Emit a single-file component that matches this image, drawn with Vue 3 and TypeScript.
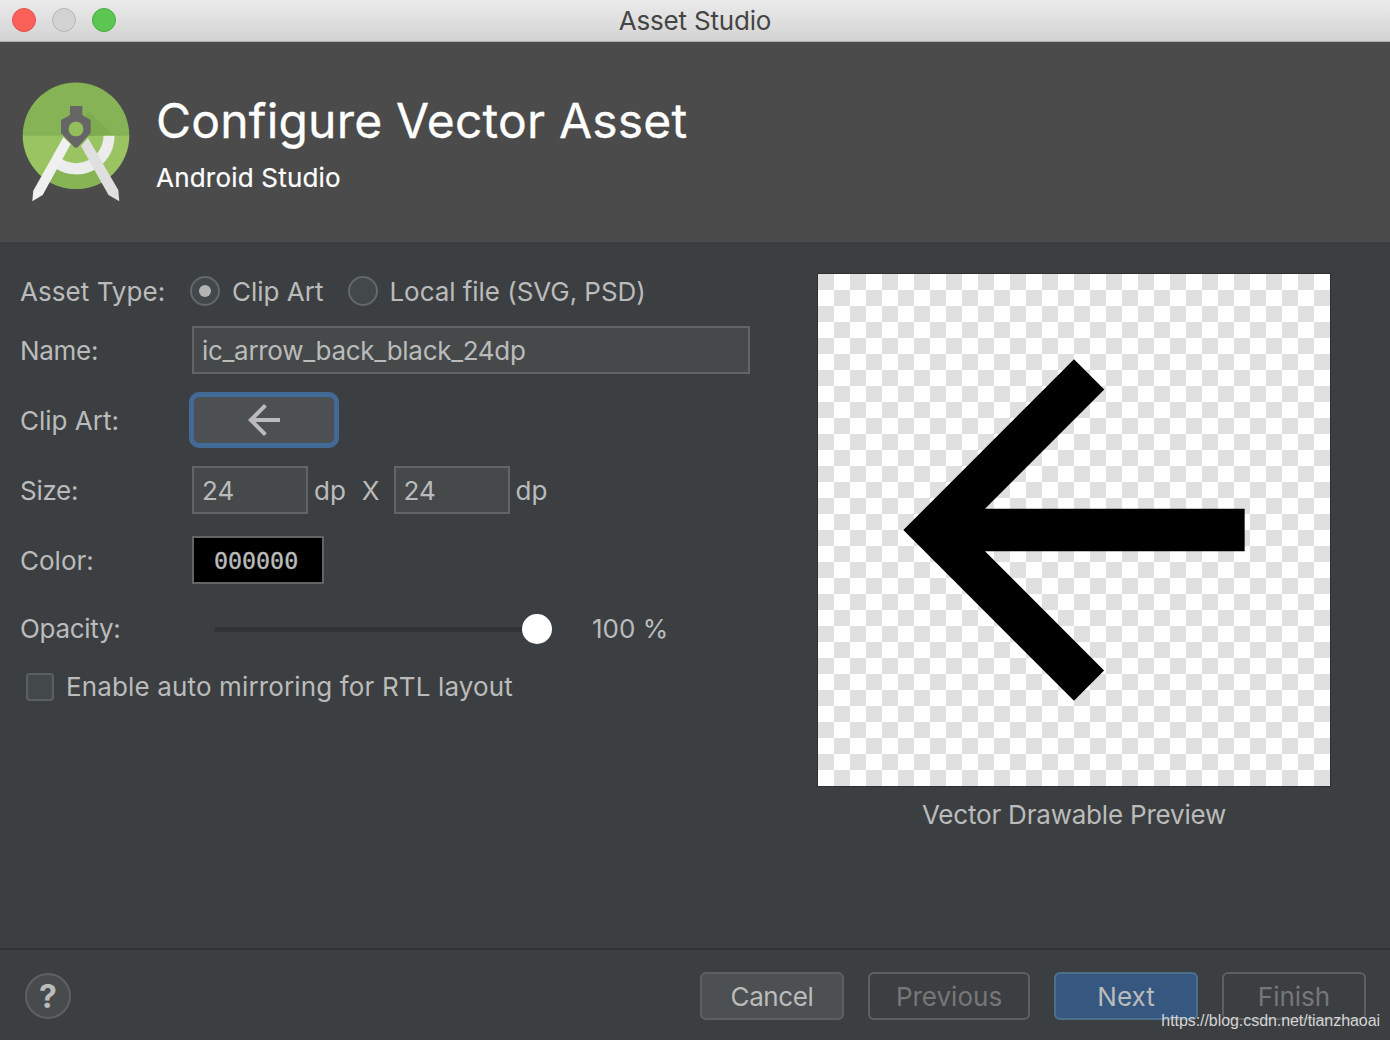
<script setup lang="ts">
const arrow = 'M20 11H7.83l5.59-5.59L12 4l-8 8 8 8 1.41-1.41L7.83 13H20v-2z'
</script>

<template>
  <div class="win">
    <div class="titlebar">
      <div class="lights">
        <span class="light red"></span>
        <span class="light gray"></span>
        <span class="light green"></span>
      </div>
      <div class="wintitle">Asset Studio</div>
    </div>

    <header class="head">
      <svg class="logo" viewBox="20 80 112 125" width="112" height="125">
        <defs>
          <clipPath id="disc"><circle cx="76" cy="135.7" r="53.3" /></clipPath>
        </defs>
        <g clip-path="url(#disc)">
          <rect x="20" y="80" width="112" height="56" fill="#87b357" />
          <rect x="20" y="135.7" width="112" height="56" fill="#9ac462" />
          <path d="M88 110 L114 135.7 H80 Z" fill="#7fac4e" />
          <path d="M51 165 A38.3 38.3 0 0 0 101 165 L118 195 H36 Z" fill="#86b454" />
        </g>
        <path d="M114.5 135.7 H103.5 A27.5 27.5 0 0 1 76 163.2 A27.5 27.5 0 0 1 57 155 L51 165 A38.3 38.3 0 0 0 114.5 135.7 Z" fill="#ececec" />
        <path d="M63.3 137.3 L70.7 144 L42.7 195 L32.3 201.3 L33.3 190.7 Z" fill="#f0f0f0" />
        <path d="M88 138 L81 146 L108.5 195 L119.3 201.3 L118.3 190 Z" fill="#dfdfdf" />
        <path fill-rule="evenodd" d="M70 106 H82.3 V115 L90.7 120 V133 L78 147 Q76 148.5 74 147 L61 133 V120 L70 115 Z M76 121.7 A7.3 7.3 0 1 0 76 136.3 A7.3 7.3 0 1 0 76 121.7 Z" fill="#666666" />
        <circle cx="76" cy="129" r="7.3" fill="#93be5a" />
      </svg>
      <div class="headtext">
        <div class="h1">Configure Vector Asset</div>
        <div class="h2">Android Studio</div>
      </div>
    </header>

    <main class="body">
      <section class="form">
        <div class="row r-type">
          <label class="lab">Asset Type:</label>
          <span class="radio on"><i></i></span>
          <span class="opt">Clip Art</span>
          <span class="radio second"></span>
          <span class="opt local">Local file (SVG, PSD)</span>
        </div>
        <div class="row r-name">
          <label class="lab">Name:</label>
          <div class="input name">ic_arrow_back_black_24dp</div>
        </div>
        <div class="row r-clip">
          <label class="lab">Clip Art:</label>
          <button class="clip" type="button">
            <svg viewBox="0 0 24 24" width="48" height="48"><path :d="arrow" fill="#bbbbbb" /></svg>
          </button>
        </div>
        <div class="row r-size">
          <label class="lab">Size:</label>
          <div class="input num">24</div>
          <span class="unit">dp</span>
          <span class="x">X</span>
          <div class="input num">24</div>
          <span class="unit">dp</span>
        </div>
        <div class="row r-color">
          <label class="lab">Color:</label>
          <div class="swatch">000000</div>
        </div>
        <div class="row r-op">
          <label class="lab">Opacity:</label>
          <div class="slider"><span class="thumb"></span></div>
          <span class="pct">100 %</span>
        </div>
        <div class="row r-check">
          <span class="check"></span>
          <span class="opt enable">Enable auto mirroring for RTL layout</span>
        </div>
      </section>

      <section class="preview">
        <div class="canvas">
          <svg viewBox="0 0 24 24" width="512" height="512"><path :d="arrow" fill="#000000" /></svg>
        </div>
        <div class="cap">Vector Drawable Preview</div>
      </section>
    </main>

    <footer class="foot">
      <span class="help">?</span>
      <div class="btns">
        <button class="btn cancel" type="button">Cancel</button>
        <button class="btn off prev" type="button">Previous</button>
        <button class="btn next" type="button">Next</button>
        <button class="btn off finish" type="button">Finish</button>
      </div>
      <span class="mark">https://blog.csdn.net/tianzhaoai</span>
    </footer>
  </div>
</template>

<style>
html, body { margin: 0; background: #3c3f41; }
</style>

<style scoped>
.win {
  position: relative;
  width: 1390px;
  height: 1040px;
  display: flex;
  flex-direction: column;
  overflow: hidden;
  background: #3c3f41;
  color: #bbbbbb;
  font-family: Inter, "Noto Sans", sans-serif;
  font-size: 26px;
}
.titlebar {
  position: relative;
  height: 41px;
  flex: none;
  display: flex;
  align-items: center;
  justify-content: center;
  background: linear-gradient(#ebebeb, #d3d3d3);
  border-bottom: 1px solid #b0b0b0;
}
.lights {
  position: absolute;
  left: 12px;
  top: 8px;
  display: flex;
  gap: 16px;
}
.light {
  width: 24px;
  height: 24px;
  border-radius: 50%;
  box-sizing: border-box;
}
.red { background: #fb6158; border: 1px solid #e2504a; }
.gray { background: #d2d2d2; border: 1px solid #b6b6b6; }
.green { background: #5bc652; border: 1px solid #48ab40; }
.wintitle { font-size: 26px; color: #454545; letter-spacing: -0.2px; }

.head {
  height: 200px;
  flex: none;
  box-sizing: border-box;
  background: #4b4b4b;
  display: flex;
  padding: 38px 0 0 20px;
}
.logo { flex: none; display: block; }
.headtext { margin-left: 24px; }
.h1 {
  font-size: 48px;
  line-height: 58px;
  margin-top: 12px;
  color: #ffffff;
  letter-spacing: 0.18px;
  -webkit-text-stroke: 0.3px #ffffff;
}
.h2 {
  font-size: 26px;
  line-height: 32px;
  margin-top: 12px;
  color: #ffffff;
  letter-spacing: 0.2px;
  -webkit-text-stroke: 0.2px #ffffff;
}

.body {
  flex: 1;
  display: flex;
  padding: 32px 60px 0 20px;
  justify-content: space-between;
}
.form { display: flex; flex-direction: column; margin-top: 2px; }
.row { display: flex; align-items: center; }
.lab { width: 172px; flex: none; }
.r-type { height: 30px; }
.r-type .lab { width: 170px; letter-spacing: 0.05px; }
.r-name { height: 48px; margin-top: 20px; }
.r-name .lab, .r-size .lab, .r-op .lab { letter-spacing: -0.3px; }
.r-clip { height: 56px; margin-top: 18px; }
.r-clip .lab { width: 169px; }
.r-size { height: 48px; margin-top: 18px; }
.r-color { height: 48px; margin-top: 22px; }
.r-op { height: 30px; margin-top: 30px; }
.r-op .lab, .r-op .pct { padding-bottom: 2px; }
.r-check { height: 30px; margin-top: 28px; }

.radio {
  width: 30px;
  height: 30px;
  box-sizing: border-box;
  flex: none;
  border-radius: 50%;
  border: 2px solid #646869;
  background: #43494a;
  display: flex;
  align-items: center;
  justify-content: center;
}
.radio i {
  width: 12px;
  height: 12px;
  border-radius: 50%;
  background: #b4b4b4;
}
.opt { margin-left: 12px; white-space: nowrap; }
.local { letter-spacing: -0.05px; margin-left: 11px; }
.enable { letter-spacing: 0.14px; padding-bottom: 2px; }
.radio.second { margin-left: 25px; }

.input {
  box-sizing: border-box;
  height: 48px;
  border: 2px solid #646464;
  background: #45494a;
  display: flex;
  align-items: center;
  padding-left: 8px;
}
.name { width: 558px; letter-spacing: -0.3px; }
.num { width: 116px; }
.unit { margin-left: 6px; }
.x { margin: 0 14px 0 16px; }
.clip {
  width: 150px;
  height: 56px;
  box-sizing: border-box;
  padding: 0;
  display: flex;
  align-items: center;
  justify-content: center;
  background: #4c5052;
  border: 5px solid #426a97;
  border-radius: 10px;
}
.swatch {
  box-sizing: border-box;
  width: 132px;
  height: 48px;
  background: #000;
  border: 2px solid #646464;
  display: flex;
  align-items: center;
  padding-left: 20px;
  font-family: "DejaVu Sans Mono", monospace;
  font-size: 23.3px;
  color: #bbbbbb;
  -webkit-text-stroke: 0.4px #bbbbbb;
}
.slider {
  position: relative;
  width: 323px;
  height: 5px;
  margin-left: 22px;
  background: #313335;
  border-radius: 3px;
}
.thumb {
  position: absolute;
  right: -15px;
  top: -13px;
  width: 30px;
  height: 30px;
  border-radius: 50%;
  background: #fff;
}
.pct { margin-left: 55px; }
.check {
  box-sizing: border-box;
  width: 28px;
  height: 28px;
  margin-left: 6px;
  border: 2px solid #5d6061;
  border-radius: 4px;
  background: #43494a;
  flex: none;
}

.preview { display: flex; flex-direction: column; align-items: center; width: 512px; }
.canvas {
  width: 512px;
  height: 512px;
  box-shadow: 0 0 0 1px #2d2f30;
  background-color: #fff;
  background-image: conic-gradient(#fff 25%, #e0e0e0 0 50%, #fff 0 75%, #e0e0e0 0);
  background-size: 32px 32px;
}
.canvas svg { display: block; }
.cap { margin-top: 13px; line-height: 32px; white-space: nowrap; letter-spacing: -0.2px; }

.foot {
  position: relative;
  height: 92px;
  flex: none;
  box-sizing: border-box;
  border-top: 2px solid #323232;
  display: flex;
  align-items: center;
  justify-content: space-between;
  padding: 2px 24px 0 25px;
}
.help {
  width: 46px;
  height: 46px;
  box-sizing: border-box;
  border-radius: 50%;
  border: 2px solid #5e6162;
  background: #484b4d;
  display: flex;
  align-items: center;
  justify-content: center;
  font-size: 32px;
  font-weight: 700;
  color: #bbbbbb;
}
.btns { display: flex; gap: 24px; }
.btn {
  box-sizing: border-box;
  height: 48px;
  width: 144px;
  border-radius: 6px;
  font: inherit;
  padding: 0;
  color: #bbbbbb;
  background: #4c5052;
  border: 2px solid #5e6060;
}
.btn.cancel { letter-spacing: -0.4px; }
.btn.prev { width: 162px; }
.btn.off { background: transparent; color: #777777; border-color: #5e6060; }
.btn.next { background: #365880; border-color: #4c708c; color: #bbbbbb; }
.mark {
  position: absolute;
  right: 10px;
  bottom: 10px;
  font-family: "Liberation Sans", sans-serif;
  font-size: 16px;
  line-height: 18px;
  letter-spacing: -0.06px;
  color: #d4d4d4;
}
</style>
